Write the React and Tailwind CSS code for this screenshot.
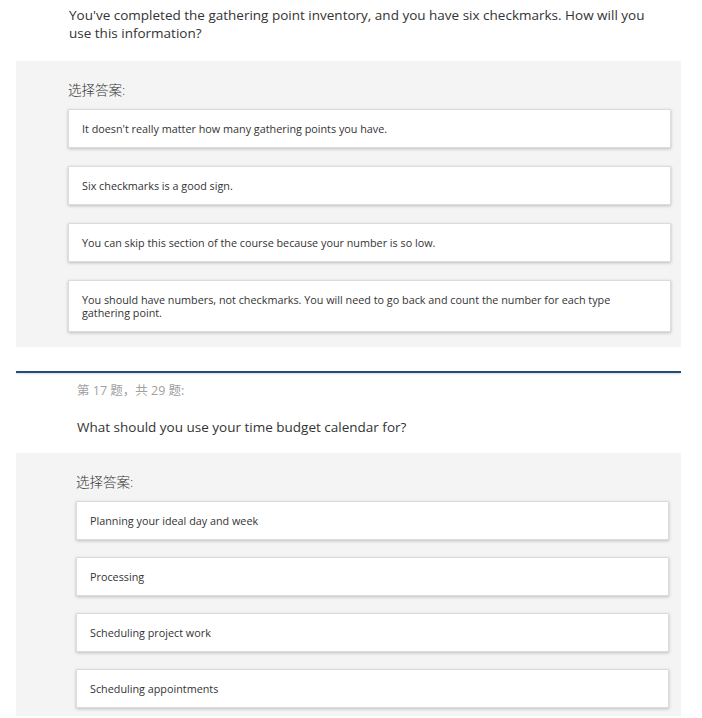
const font = { fontFamily: '"Open Sans", "Noto Sans CJK SC", sans-serif' };

const first = [
  "It doesn't really matter how many gathering points you have.",
  "Six checkmarks is a good sign.",
  "You can skip this section of the course because your number is so low.",
  "You should have numbers, not checkmarks. You will need to go back and count the number for each type gathering point.",
];

const second = [
  "Planning your ideal day and week",
  "Processing",
  "Scheduling project work",
  "Scheduling appointments",
];

function Card({ text }) {
  return (
    <div className="bg-white border border-[#dcdcdc] shadow-[0_1px_3px_rgba(0,0,0,0.22)] pl-[13px] pr-[40px] py-[12px] text-[10.8px] leading-[13px] text-[#333]">
      {text}
    </div>
  );
}

export default function App() {
  return (
    <div className="w-[702px] h-[718px] bg-white overflow-hidden" style={font}>
      {/* question 16, tail */}
      <p className="pl-[69px] pr-[40px] pt-[6px] text-[13.5px] leading-[18px] text-[#333]">
        You've completed the gathering point inventory, and you have six checkmarks. How will you use this information?
      </p>
      <div className="mx-[16px] mt-[19px] w-[665px] bg-[#f4f4f4] pl-[52px] pr-[10px] pt-[19px] pb-[15px]">
        <div className="text-[13.5px] leading-[20px] text-[#333] mb-[9px]" style={{ fontWeight: 300 }}>选择答案:</div>
        <div className="flex flex-col gap-[18px]">
          {first.map((t) => <Card key={t} text={t} />)}
        </div>
      </div>

      {/* question 17 */}
      <div className="mx-[16px] mt-[24px] w-[665px] h-[2px] bg-[#1f4e79] shadow-[0_1px_2px_rgba(0,0,0,0.15)]" />
      <div className="pl-[77px] pt-[9px] text-[12.5px] leading-[18px] text-[#a0a0a0]">第 17 题，共 29 题:</div>
      <p className="pl-[77px] mt-[18px] text-[13.5px] leading-[18px] text-[#333]">What should you use your time budget calendar for?</p>
      <div className="mx-[16px] mt-[17px] w-[665px] bg-[#f4f4f4] pl-[60px] pr-[12px] pt-[19px] pb-[8px]">
        <div className="text-[13.5px] leading-[20px] text-[#333] mb-[9px]" style={{ fontWeight: 300 }}>选择答案:</div>
        <div className="flex flex-col gap-[17px]">
          {second.map((t) => <Card key={t} text={t} />)}
        </div>
      </div>
    </div>
  );
}
